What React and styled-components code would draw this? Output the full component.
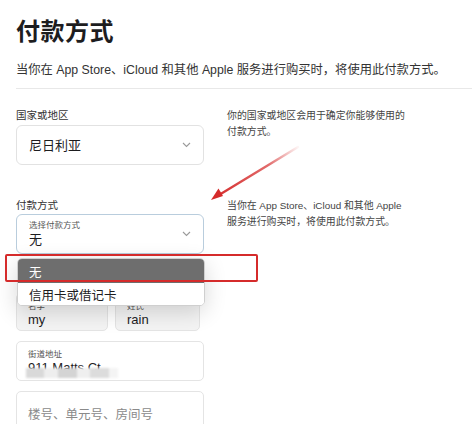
import React from 'react';
import styled, { createGlobalStyle } from 'styled-components';

const GlobalStyle = createGlobalStyle`
  html, body {
    margin: 0;
    padding: 0;
    background: #ffffff;
  }
  body {
    font-family: "Liberation Sans", "Noto Sans CJK SC", sans-serif;
    color: #1d1d1f;
    -webkit-font-smoothing: antialiased;
  }
`;

const Page = styled.div`
  position: relative;
  width: 472px;
  height: 424px;
  overflow: hidden;
  padding: 17px 0 0 16px;
  box-sizing: border-box;
`;

const Title = styled.h1`
  margin: 0;
  font-size: 24px;
  line-height: 30px;
  font-weight: 700;
  letter-spacing: 0.5px;
`;

const Lead = styled.p`
  margin: 15px 0 0;
  font-size: 12.3px;
  line-height: 16px;
  color: #333;
`;

const Divider = styled.hr`
  margin: 10px 0 0;
  border: none;
  border-top: 1px solid #e8e8e8;
`;

const Section = styled.div`
  display: grid;
  grid-template-columns: 188px 1fr;
  column-gap: 23px;
  margin-top: ${p => p.$top}px;
`;

const Field = styled.div`
  position: relative;
  display: flex;
  flex-direction: column;
`;

const Label = styled.div`
  font-size: 10.5px;
  line-height: 14px;
  color: #333;
  margin-bottom: ${p => p.$gap || 3}px;
`;

const Hint = styled.div`
  font-size: 9.9px;
  line-height: 15.5px;
  color: #444;
`;

const SelectBox = styled.div`
  display: flex;
  align-items: center;
  justify-content: space-between;
  height: 40px;
  box-sizing: border-box;
  padding: 0 12px;
  border: 1px solid ${p => (p.$focus ? '#b9cddd' : '#e2e2e2')};
  border-radius: 6px;
  background: #fff;
`;

const SelectValue = styled.div`
  display: flex;
  flex-direction: column;
  font-size: 13px;
  line-height: 17px;
  color: #1d1d1f;
`;

const SmallCaption = styled.span`
  font-size: 8.5px;
  line-height: 11px;
  color: #555;
`;

const Chevron = () => (
  <svg width="9" height="6" viewBox="0 0 9 6">
    <path d="M1 1l3.5 3.5L8 1" fill="none" stroke="#9a9a9a" strokeWidth="1.1" />
  </svg>
);

const Menu = styled.div`
  position: absolute;
  left: 1px;
  top: calc(100% + 4px);
  width: 186px;
  background: #fff;
  border: 1px solid #cfcfcf;
  border-radius: 5px;
  box-shadow: 0 6px 22px rgba(0, 0, 0, 0.16);
  overflow: hidden;
  z-index: 2;
`;

const Option = styled.div`
  height: ${p => (p.$active ? 24 : 22)}px;
  display: flex;
  align-items: center;
  padding-left: 11px;
  font-size: 12.5px;
  color: ${p => (p.$active ? '#fff' : '#1d1d1f')};
  background: ${p => (p.$active ? '#6e6e6e' : '#fff')};
`;

const NameRow = styled.div`
  display: grid;
  grid-template-columns: 92px 85px;
  column-gap: 7px;
  margin-top: 39px;
`;

const InputBox = styled.div`
  position: relative;
  display: flex;
  flex-direction: column;
  justify-content: ${p => (p.$placeholder ? 'center' : 'flex-start')};
  height: ${p => p.$h || 40}px;
  width: ${p => p.$w || 188}px;
  box-sizing: border-box;
  padding: ${p => (p.$placeholder ? '0 11px' : '7px 11px 0')};
  border: 1px solid #e4e4e4;
  border-radius: 5px;
  background: ${p => (p.$dim ? '#f4f4f4' : '#fff')};
  margin-top: ${p => p.$top || 0}px;
  overflow: hidden;
`;

const InputValue = styled.span`
  position: relative;
  font-size: 13px;
  line-height: 16px;
  color: #1d1d1f;
`;

const Placeholder = styled.span`
  font-size: 12.5px;
  color: #8a8a8a;
`;

/* privacy mosaic laid over the lower half of the street value */
const Smudge = styled.span`
  position: absolute;
  left: -2px;
  top: 8px;
  width: 92px;
  height: 10px;
  background: linear-gradient(90deg, #d9d9d9 0 20%, #eeeeee 20% 35%, #d4d4d4 35% 55%, #efefef 55% 70%, #dcdcdc 70% 90%, #f4f4f4 90% 100%);
  filter: blur(1px);
`;

const Callout = styled.div`
  position: absolute;
  left: 5px;
  top: 254px;
  width: 253px;
  height: 28px;
  box-sizing: border-box;
  border: 2px solid #d52b2b;
  border-radius: 2px;
  z-index: 3;
`;

const ArrowLayer = styled.svg`
  position: absolute;
  left: 205px;
  top: 140px;
  z-index: 3;
`;

const Arrow = () => (
  <ArrowLayer width="100" height="66" viewBox="0 0 100 66">
    <defs>
      <linearGradient id="shaft" x1="93" y1="7" x2="8" y2="58" gradientUnits="userSpaceOnUse">
        <stop offset="0" stopColor="#d52b2b" stopOpacity="0.05" />
        <stop offset="0.35" stopColor="#d52b2b" stopOpacity="0.7" />
        <stop offset="1" stopColor="#d52b2b" />
      </linearGradient>
    </defs>
    <path d="M93 7L14 55" stroke="url(#shaft)" strokeWidth="2.4" strokeLinecap="round" />
    <path d="M6 60l7.5-11.5 4.5 7.5z" fill="#d52b2b" />
  </ArrowLayer>
);

export default function App() {
  return (
    <Page>
      <GlobalStyle />
      <Title>付款方式</Title>
      <Lead>当你在 App Store、iCloud 和其他 Apple 服务进行购买时，将使用此付款方式。</Lead>
      <Divider />

      <Section $top={19}>
        <Field>
          <Label>国家或地区</Label>
          <SelectBox>
            <SelectValue>尼日利亚</SelectValue>
            <Chevron />
          </SelectBox>
        </Field>
        <Hint>
          你的国家或地区会用于确定你能够使用的
          <br />
          付款方式。
        </Hint>
      </Section>

      <Section $top={33}>
        <Field>
          <Label $gap={2}>付款方式</Label>
          <SelectBox $focus>
            <SelectValue>
              <SmallCaption>选择付款方式</SmallCaption>
              无
            </SelectValue>
            <Chevron />
          </SelectBox>
          <Menu>
            <Option $active>无</Option>
            <Option>信用卡或借记卡</Option>
          </Menu>
        </Field>
        <Hint>
          当你在 App Store、iCloud 和其他 Apple
          <br />
          服务进行购买时，将使用此付款方式。
        </Hint>
      </Section>

      <NameRow>
        <InputBox $w={92} $h={38} $dim>
          <SmallCaption>名字</SmallCaption>
          <InputValue>my</InputValue>
        </InputBox>
        <InputBox $w={85} $h={38} $dim>
          <SmallCaption>姓氏</SmallCaption>
          <InputValue>rain</InputValue>
        </InputBox>
      </NameRow>

      <InputBox $top={10}>
        <SmallCaption>街道地址</SmallCaption>
        <InputValue>
          911 Matts Ct
          <Smudge />
        </InputValue>
      </InputBox>

      <InputBox $top={10} $h={44} $placeholder>
        <Placeholder>楼号、单元号、房间号</Placeholder>
      </InputBox>

      <Arrow />
      <Callout />
    </Page>
  );
}
